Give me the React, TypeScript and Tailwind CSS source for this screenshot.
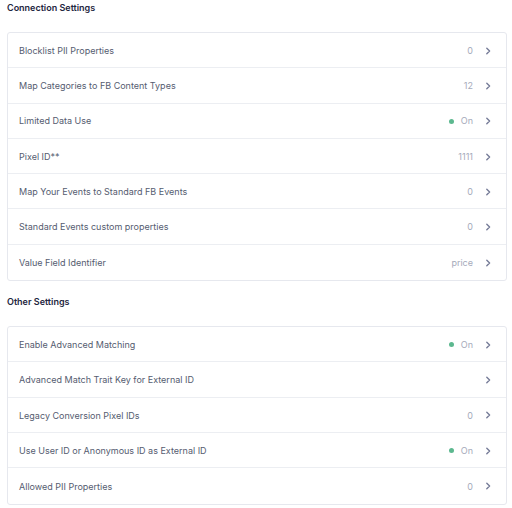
import React from 'react';

type Row = {
  label: string;
  value?: string;
  on?: boolean;
};

const connection: Row[] = [
  { label: 'Blocklist PII Properties', value: '0' },
  { label: 'Map Categories to FB Content Types', value: '12' },
  { label: 'Limited Data Use', value: 'On', on: true },
  { label: 'Pixel ID**', value: '1111' },
  { label: 'Map Your Events to Standard FB Events', value: '0' },
  { label: 'Standard Events custom properties', value: '0' },
  { label: 'Value Field Identifier', value: 'price' },
];

const other: Row[] = [
  { label: 'Enable Advanced Matching', value: 'On', on: true },
  { label: 'Advanced Match Trait Key for External ID' },
  { label: 'Legacy Conversion Pixel IDs', value: '0' },
  { label: 'Use User ID or Anonymous ID as External ID', value: 'On', on: true },
  { label: 'Allowed PII Properties', value: '0' },
];

function Chevron() {
  return (
    <svg width="8" height="8" viewBox="0 0 8 8" fill="none" className="text-[#767c98]">
      <path d="M2.8 1.2 L5.6 4 L2.8 6.8" stroke="currentColor" strokeWidth="1.4" strokeLinecap="round" strokeLinejoin="round" />
    </svg>
  );
}

function SettingsCard({ rows }: { rows: Row[] }) {
  return (
    <div className="rounded-[3px] border border-[#e6e8ee] bg-white">
      {rows.map((row, i) => (
        <div
          key={row.label}
          className={`flex h-[35.3px] items-center justify-between pt-px pl-[11px] pr-[14px] ${
            i < rows.length - 1 ? 'border-b border-[#eceef2]' : ''
          }`}
        >
          <span className="text-[9px] text-[#555c70]">{row.label}</span>
          <div className="flex items-center">
            {row.on && <span className="mr-[7px] h-[5px] w-[5px] rounded-full bg-[#5cb88f]" />}
            {row.value && <span className="text-[9px] text-[#a5aaba]">{row.value}</span>}
            <span className="ml-[11px] flex">
              <Chevron />
            </span>
          </div>
        </div>
      ))}
    </div>
  );
}

export default function App() {
  return (
    <div className="w-[512px] bg-white pl-[7px] pr-[5px] pb-1 font-['Inter',sans-serif]">
      <h2 className="flex h-4 items-center text-[9px] font-semibold text-[#1e2640]">Connection Settings</h2>
      <div className="mt-4">
        <SettingsCard rows={connection} />
      </div>
      <h2 className="mt-[13px] flex h-4 items-center text-[9px] font-semibold text-[#1e2640]">Other Settings</h2>
      <div className="mt-4">
        <SettingsCard rows={other} />
      </div>
    </div>
  );
}
